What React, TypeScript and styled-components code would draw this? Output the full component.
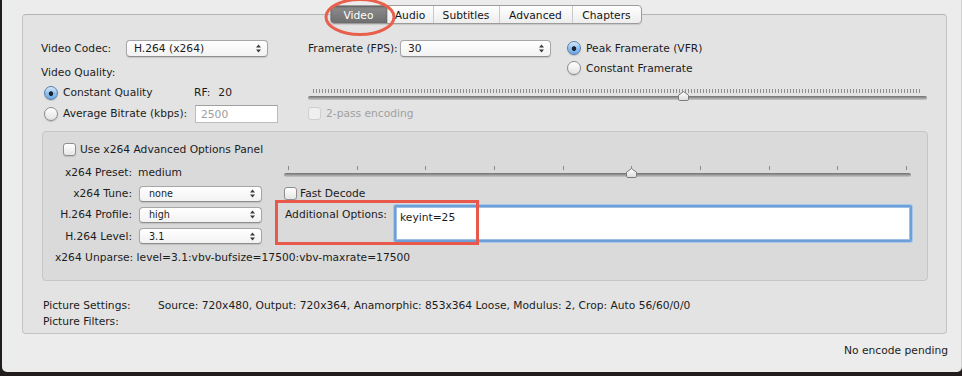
import React from "react";
import styled, { createGlobalStyle } from "styled-components";

const GlobalStyle = createGlobalStyle`
  html, body {
    margin: 0;
    padding: 0;
  }
  body {
    width: 962px;
    height: 376px;
    overflow: hidden;
    background: #221d1c;
    font-family: "DejaVu Sans", "Liberation Sans", sans-serif;
    font-size: 10.7px;
    line-height: 13px;
    color: #1c1c1c;
  }
`;

const tabs = [
  { name: "Video", w: 57 },
  { name: "Audio", w: 46 },
  { name: "Subtitles", w: 66 },
  { name: "Advanced", w: 73 },
  { name: "Chapters", w: 69 },
];

function Arrows() {
  return (
    <svg width="5" height="9" viewBox="0 0 5 9">
      <path d="M0 3.5 L2.5 0.5 L5 3.5 Z M0 5.5 L2.5 8.5 L5 5.5 Z" fill="#3a3a3a" />
    </svg>
  );
}

function PopUp({ value, width, small }: { value: string; width: number; small?: boolean }) {
  return (
    <Select $w={width} $small={small}>
      <span>{value}</span>
      <Arrows />
    </Select>
  );
}

function Radio({ on, label, indent = 0 }: { on?: boolean; label: string; indent?: number }) {
  return (
    <Choice $indent={indent}>
      <RadioDot $on={on} />
      <span>{label}</span>
    </Choice>
  );
}

function Check({ label, disabled, gap = 4 }: { label: string; disabled?: boolean; gap?: number }) {
  return (
    <Choice $gap={gap} $disabled={disabled}>
      <Box $disabled={disabled} />
      <span>{label}</span>
    </Choice>
  );
}

function Slider({ value, dense, inset, top }: { value: number; dense?: boolean; inset: number; top: number }) {
  return (
    <SliderBox $pt={top}>
      <Ticks $dense={dense} $inset={inset}>
        {!dense && Array.from({ length: 10 }).map((_, i) => <Tick key={i} />)}
      </Ticks>
      <Track />
      <Thumb
        width="11"
        height="10"
        viewBox="0 0 11 10"
        style={{ left: `calc(${inset}px + ${value} * (100% - ${inset * 2}px))` }}
      >
        <defs>
          <linearGradient id={`tg${top}`} x1="0" y1="0" x2="0" y2="1">
            <stop offset="0" stopColor="#ffffff" />
            <stop offset="1" stopColor="#dcdcdc" />
          </linearGradient>
        </defs>
        <path d="M0.5 4.2 L5.5 0.6 L10.5 4.2 V8.2 Q10.5 9.5 9.2 9.5 H1.8 Q0.5 9.5 0.5 8.2 Z" fill={`url(#tg${top})`} stroke="#7b7b7b" />
      </Thumb>
    </SliderBox>
  );
}

export default function App() {
  return (
    <>
      <GlobalStyle />
      <Window>
        <TabRow>
          <TabBar>
            {tabs.map((t, i) => (
              <Tab key={t.name} $w={t.w} $active={i === 0} $first={i === 0}>
                {t.name}
              </Tab>
            ))}
          </TabBar>
        </TabRow>
        <Oval width="74" height="40" viewBox="0 0 74 40">
          <ellipse cx="37" cy="19" rx="34" ry="17.5" fill="none" stroke="#e8604c" strokeWidth="3" />
        </Oval>

        <Panel>
          <TopGrid>
            <Field $col="1 / 3">
              <FieldLabel $w={85}>Video Codec:</FieldLabel>
              <PopUp value="H.264 (x264)" width={142} />
            </Field>
            <Field $col="3 / 4">
              <FieldLabel $w={92}>Framerate (FPS):</FieldLabel>
              <PopUp value="30" width={151} />
            </Field>
            <RadioStack>
              <Radio on label="Peak Framerate (VFR)" />
              <Radio label="Constant Framerate" />
            </RadioStack>

            <QualityLabel>Video Quality:</QualityLabel>

            <Radio on label="Constant Quality" indent={3} />
            <RfValue>
              RF:<b>20</b>
            </RfValue>
            <Wide>
              <Slider value={0.6076} dense inset={5} top={7} />
            </Wide>

            <Radio label="Average Bitrate (kbps):" indent={3} />
            <TextInput>2500</TextInput>
            <Check label="2-pass encoding" disabled gap={5} />
          </TopGrid>

          <Inner>
            <CheckRow>
              <Check label="Use x264 Advanced Options Panel" />
            </CheckRow>
            <InnerGrid>
              <RightLabel>x264 Preset:</RightLabel>
              <span>medium</span>
              <Slider value={5 / 9} inset={4} top={5} />

              <RightLabel>x264 Tune:</RightLabel>
              <PopUp value="none" width={123} small />
              <Check label="Fast Decode" gap={3} />

              <RightLabel>H.264 Profile:</RightLabel>
              <PopUp value="high" width={123} small />
              <Additional>
                <AddLabel>Additional Options:</AddLabel>
                <OptionsArea>keyint=25</OptionsArea>
                <Highlight />
              </Additional>

              <RightLabel>H.264 Level:</RightLabel>
              <PopUp value="3.1" width={123} small />

              <Unparse>x264 Unparse: level=3.1:vbv-bufsize=17500:vbv-maxrate=17500</Unparse>
            </InnerGrid>
          </Inner>

          <Picture>
            <span>Picture Settings:</span>
            <span>
              Source: 720x480, Output: 720x364, Anamorphic: 853x364 Loose, Modulus: 2, Crop: Auto 56/60/0/0
            </span>
            <span>Picture Filters:</span>
            <span />
          </Picture>
        </Panel>

        <Status>No encode pending</Status>
      </Window>
    </>
  );
}

const Window = styled.div`
  position: relative;
  box-sizing: border-box;
  margin-left: 2px;
  width: 960px;
  height: 372px;
  padding: 5px 0 0 20px;
  background: #ececec;
  border-right: 1px solid #d2d2d2;
  border-radius: 0 0 5px 5px;
`;

const TabRow = styled.div`
  position: relative;
  z-index: 1;
  display: flex;
  justify-content: center;
  width: 927px;
`;

const TabBar = styled.div`
  display: flex;
  height: 19px;
  box-sizing: border-box;
  border: 1px solid #9c9c9c;
  border-radius: 4px;
  background: linear-gradient(#ffffff, #ededed);
  box-shadow: 0 1px 1px rgba(0, 0, 0, 0.12);
  overflow: hidden;
`;

const Tab = styled.div<{ $w: number; $active?: boolean; $first?: boolean }>`
  width: ${(p) => p.$w - (p.$first ? 1 : 0)}px;
  display: flex;
  align-items: center;
  justify-content: center;
  color: ${(p) => (p.$active ? "#ffffff" : "#141414")};
  border-left: ${(p) => (p.$first ? "none" : "1px solid #c9c9c9")};
  background: ${(p) => (p.$active ? "linear-gradient(#8d8d8d, #6f6f6f)" : "transparent")};
  box-shadow: ${(p) => (p.$active ? "inset 0 1px 2px rgba(0,0,0,0.35)" : "none")};
  box-sizing: border-box;
  padding-top: 1px;
`;

const Oval = styled.svg`
  position: absolute;
  left: 321px;
  top: -2px;
  z-index: 2;
  pointer-events: none;
`;

const Panel = styled.div`
  box-sizing: border-box;
  width: 925px;
  height: 320px;
  margin-top: -10px;
  padding: 23px 19px 0 18px;
  background: #e3e3e3;
  border: 1px solid #c3c3c3;
  border-top-color: #b3b3b3;
  border-radius: 4px;
`;

const TopGrid = styled.div`
  display: grid;
  grid-template-columns: 153px 114px 259px 1fr;
  grid-template-rows: 20px 24px 21px 21px;
  align-items: center;
`;

const Field = styled.div<{ $col: string }>`
  grid-column: ${(p) => p.$col};
  display: flex;
  align-items: center;
`;

const FieldLabel = styled.span<{ $w: number }>`
  width: ${(p) => p.$w}px;
  flex: none;
`;

const Select = styled.div<{ $w: number; $small?: boolean }>`
  box-sizing: border-box;
  width: ${(p) => p.$w}px;
  height: ${(p) => (p.$small ? 16 : 17)}px;
  margin-left: ${(p) => (p.$small ? 1 : 0)}px;
  display: flex;
  align-items: center;
  justify-content: space-between;
  padding: 0 6px 0 ${(p) => (p.$small ? 9 : 7)}px;
  font-size: ${(p) => (p.$small ? "9.6px" : "10.7px")};
  background: linear-gradient(#ffffff, #f2f2f2);
  border: 1px solid #a6a6a6;
  border-bottom-color: #8e8e8e;
  border-radius: 4px;
  box-shadow: 0 1px 1px rgba(0, 0, 0, 0.12);
`;

const RadioStack = styled.div`
  grid-column: 4;
  grid-row: 1 / 3;
  align-self: start;
  display: flex;
  flex-direction: column;
  & > * {
    height: 20px;
  }
`;

const Choice = styled.label<{ $indent?: number; $gap?: number; $disabled?: boolean }>`
  display: flex;
  align-items: center;
  gap: ${(p) => p.$gap ?? 5}px;
  padding-left: ${(p) => p.$indent ?? 0}px;
  color: ${(p) => (p.$disabled ? "#a0a0a0" : "inherit")};
  white-space: nowrap;
`;

const RadioDot = styled.span<{ $on?: boolean }>`
  box-sizing: border-box;
  width: 14px;
  height: 14px;
  flex: none;
  border-radius: 50%;
  border: 1px solid ${(p) => (p.$on ? "#5a7ea6" : "#8c8c8c")};
  background: ${(p) =>
    p.$on
      ? "radial-gradient(circle at 50% 55%, #1c2430 0 2px, transparent 2.6px), linear-gradient(#d4e8fb, #93c3ef 50%, #6aa8e6)"
      : "linear-gradient(#ffffff, #e2e2e2)"};
  box-shadow: 0 1px 1px rgba(0, 0, 0, 0.15);
`;

const Box = styled.span<{ $disabled?: boolean }>`
  box-sizing: border-box;
  width: 13px;
  height: 13px;
  flex: none;
  border-radius: 3px;
  border: 1px solid ${(p) => (p.$disabled ? "#cfcfcf" : "#8f8f8f")};
  background: ${(p) => (p.$disabled ? "#efefef" : "linear-gradient(#ffffff, #e6e6e6)")};
  box-shadow: ${(p) => (p.$disabled ? "none" : "0 1px 1px rgba(0,0,0,0.12)")};
`;

const QualityLabel = styled.span`
  grid-column: 1 / 4;
  padding-top: 4px;
`;

const RfValue = styled.span`
  b {
    font-weight: normal;
    margin-left: 8px;
  }
`;

const Wide = styled.div`
  grid-column: 3 / 5;
  align-self: start;
  height: 21px;
`;

const SliderBox = styled.div<{ $pt: number }>`
  position: relative;
  align-self: start;
  padding-top: ${(p) => p.$pt}px;
`;

const Ticks = styled.div<{ $dense?: boolean; $inset: number }>`
  height: 4px;
  margin: 0 ${(p) => p.$inset}px;
  display: flex;
  justify-content: space-between;
  background: ${(p) =>
    p.$dense ? "repeating-linear-gradient(to right, #8e8e8e 0 1px, transparent 1px 3px)" : "none"};
`;

const Tick = styled.span`
  width: 1px;
  height: 4px;
  background: #8a8a8a;
`;

const Track = styled.div`
  margin-top: 3px;
  height: 4px;
  border-radius: 2px;
  background: linear-gradient(#6f6f6f, #9c9c9c 50%, #c8c8c8);
`;

const Thumb = styled.svg`
  position: absolute;
  bottom: -1px;
  margin-left: -5.5px;
`;

const TextInput = styled.div`
  box-sizing: border-box;
  width: 83px;
  height: 18px;
  margin-left: 1px;
  padding: 2px 5px 0;
  background: #ffffff;
  border: 1px solid #bcbcbc;
  border-top-color: #a0a0a0;
  color: #9c9c9c;
`;

const Inner = styled.div`
  box-sizing: border-box;
  height: 150px;
  margin: 7px -1px 0 1px;
  padding-top: 8px;
  background: #dadada;
  border: 1px solid #c6c6c6;
  border-radius: 4px;
`;

const CheckRow = styled.div`
  height: 18px;
  display: flex;
  align-items: center;
  padding-left: 20px;
`;

const InnerGrid = styled.div`
  margin-top: 3px;
  display: grid;
  grid-template-columns: 89px 140px 627px;
  grid-template-rows: 22px 21px 21px 22px 20px;
  column-gap: 6px;
  align-items: center;
`;

const RightLabel = styled.span`
  text-align: right;
  white-space: nowrap;
`;

const Additional = styled.div`
  position: relative;
  grid-column: 3;
  grid-row: 3 / 5;
  align-self: stretch;
  display: flex;
  align-items: flex-start;
`;

const AddLabel = styled.span`
  width: 109px;
  flex: none;
  padding: 4px 0 0 1px;
`;

const OptionsArea = styled.div`
  box-sizing: border-box;
  flex: 1;
  height: 37px;
  margin: 1px -1px 0 0;
  padding: 4px 0 0 4px;
  background: #ffffff;
  border: 2px solid #6d9fd9;
  box-shadow: 0 0 0 1px #a9c8ec, inset 0 0 0 1px #9dbfe6;
  border-radius: 2px;
`;

const Highlight = styled.div`
  position: absolute;
  left: -9px;
  top: -4px;
  width: 204px;
  height: 45px;
  box-sizing: border-box;
  border: 3px solid #e8584b;
  pointer-events: none;
`;

const Unparse = styled.span`
  grid-column: 1 / -1;
  padding-left: 12px;
`;

const Picture = styled.div`
  display: grid;
  grid-template-columns: 115px auto;
  grid-auto-rows: 16px;
  align-items: center;
  margin-top: 16px;
  padding-left: 2px;
`;

const Status = styled.div`
  margin-top: 10px;
  padding-right: 13px;
  height: 14px;
  line-height: 14px;
  text-align: right;
`;
